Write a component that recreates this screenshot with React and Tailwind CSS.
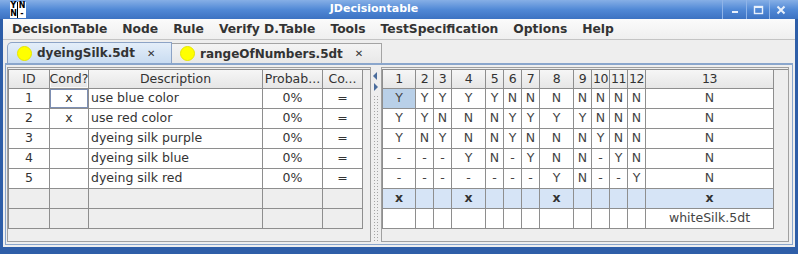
import React from "react";

const menuItems = ["DecisionTable", "Node", "Rule", "Verify D.Table", "Tools", "TestSpecification", "Options", "Help"];

const leftRows = [
  ["1", "x", "use blue color", "0%", "="],
  ["2", "x", "use red color", "0%", "="],
  ["3", "", "dyeing silk purple", "0%", "="],
  ["4", "", "dyeing silk blue", "0%", "="],
  ["5", "", "dyeing silk red", "0%", "="],
];

const rightRows = [
  "Y Y Y Y Y N N N N N N N N",
  "Y Y N N N Y Y Y Y N N N N",
  "Y N Y N N Y N N N Y N N N",
  "- - - Y N - Y N N - Y N N",
  "- - - - - - - Y N - - Y N",
].map((r) => r.split(" "));

const formRow = ["x", "", "", "x", "", "", "", "x", "", "", "", "", "x"];

const cell = "border-r border-b border-[#8e8e8e] flex items-center justify-center overflow-hidden whitespace-nowrap";

function TitleBar() {
  return (
    <div className="h-[19px] flex items-stretch bg-gradient-to-b from-[#86afe6] via-[#5189d6] to-[#3c72c2]">
      <div className="ml-[10px] mt-[2px] w-[16px] h-[16px] bg-white grid grid-cols-2 text-[8px] leading-[8px] font-bold text-black font-['DejaVu_Sans',sans-serif]">
        <span className="text-center border-r border-black">Y</span>
        <span className="text-center">N</span>
        <span className="text-center border-r border-black">N</span>
        <span className="text-center">-</span>
      </div>
      <div className="flex-1 flex items-center justify-center text-white font-bold text-[11px] font-['DejaVu_Sans',sans-serif]">
        JDecisiontable
      </div>
      <div className="flex items-stretch">
        <div className="w-[24px] border-l border-[#8fb4e8] flex items-center justify-center">
          <svg width="10" height="10" viewBox="0 0 10 10">
            <rect x="2" y="6" width="6" height="2" fill="#e8f0fb" />
          </svg>
        </div>
        <div className="w-[23px] border-l border-[#8fb4e8] flex items-center justify-center">
          <svg width="11" height="10" viewBox="0 0 11 10">
            <rect x="1.5" y="1.5" width="8" height="7" fill="none" stroke="#e8f0fb" strokeWidth="1.4" />
            <rect x="1.5" y="1" width="8" height="2" fill="#e8f0fb" />
          </svg>
        </div>
        <div className="w-[29px] border-l border-[#8fb4e8] flex items-center justify-center pr-[6px]">
          <svg width="10" height="10" viewBox="0 0 10 10">
            <path d="M1.5 1.5 L8.5 8.5 M8.5 1.5 L1.5 8.5" stroke="#e8f0fb" strokeWidth="2" />
          </svg>
        </div>
      </div>
    </div>
  );
}

function LeftTable() {
  return (
    <div className="border-l border-t border-[#8e8e8e] grid grid-cols-[41px_39px_174px_60px_40px] text-[12.5px] text-[#333]">
      {["ID", "Cond?", "Description", "Probab...", "Co..."].map((h, i) => (
        <div key={h} className={`${cell} h-[19px] bg-gradient-to-b from-[#f6f6f6] to-[#e6e6e6] ${i === 1 ? "shadow-[inset_0_0_0_1px_#fafafa]" : ""}`}>
          {h}
        </div>
      ))}
      {leftRows.map((r, ri) =>
        r.map((c, ci) => (
          <div
            key={`${ri}-${ci}`}
            className={`${cell} h-[20px] bg-white ${ci === 2 ? "!justify-start pl-[2px]" : ""} ${ri === 0 && ci === 1 ? "shadow-[inset_0_0_0_1px_#7d8fb3]" : ""}`}
          >
            {c}
          </div>
        ))
      )}
      {[0, 1].map((ri) =>
        [0, 1, 2, 3, 4].map((ci) => <div key={`e${ri}-${ci}`} className={`${cell} h-[20px] bg-[#eeeeee]`} />)
      )}
    </div>
  );
}

function RightTable() {
  return (
    <div className="border-l border-t border-[#8e8e8e] grid grid-cols-[33px_18px_18px_34px_18px_18px_18px_34px_18px_18px_18px_18px_128px] text-[12.5px] text-[#444]">
      {Array.from({ length: 13 }, (_, i) => (
        <div key={`h${i}`} className={`${cell} h-[19px] bg-gradient-to-b from-[#f6f6f6] to-[#e6e6e6] text-[#333] tracking-[-0.5px]`}>
          {i + 1}
        </div>
      ))}
      {rightRows.map((r, ri) =>
        r.map((c, ci) => (
          <div key={`${ri}-${ci}`} className={`${cell} h-[20px] ${ri === 0 && ci === 0 ? "bg-[#b9d0e8]" : "bg-white"}`}>
            {c}
          </div>
        ))
      )}
      {formRow.map((c, ci) => (
        <div key={`f${ci}`} className={`${cell} h-[20px] bg-[#d6e4f6] font-bold text-[#333]`}>
          {c}
        </div>
      ))}
      {formRow.map((_, ci) => (
        <div key={`w${ci}`} className={`${cell} h-[20px] bg-white`}>
          {ci === 12 ? "whiteSilk.5dt" : ""}
        </div>
      ))}
    </div>
  );
}

function Splitter() {
  return (
    <div className="w-[10px] flex flex-col items-center">
      <svg width="10" height="24" viewBox="0 0 10 24" className="mt-[4px] shrink-0">
        <path d="M6 1 L2 5 L6 9 Z" fill="#4a6c9c" />
        <path d="M3 12 L7 16 L3 20 Z" fill="#4a6c9c" />
      </svg>
      <div className="flex-1 w-[7px] mb-[1px] bg-[radial-gradient(circle,#a4a4a4_0.7px,transparent_0.9px)] bg-[length:3px_3px]" />
    </div>
  );
}

export default function App() {
  return (
    <div className="w-[798px] h-[254px] overflow-hidden flex flex-col bg-[#2e5ea8] font-['DejaVu_Sans',sans-serif]">
      <TitleBar />
      <div className="flex-1 mx-[3px] mb-[7px] flex flex-col bg-[#eeeeee] pb-[2px]">
        <div className="h-[21px] flex items-center gap-[15px] pl-[9px] bg-gradient-to-b from-[#fbfbfb] to-[#efefef] border-b border-[#c4c4c4] text-[12.3px] font-bold text-[#333]">
          {menuItems.map((m) => (
            <span key={m}>{m}</span>
          ))}
        </div>
        <div className="h-[23px] flex items-end pl-[4px]">
          <div className="w-[165px] h-[21px] flex items-center border border-b-0 border-[#8ca3c6] rounded-tl-[5px] bg-gradient-to-b from-[#e4eef9] to-[#c9dcf1] text-[12px] font-bold text-[#333]">
            <span className="ml-[9px] w-[15px] h-[15px] rounded-full bg-[#ffff00] border border-[#e6e600]" />
            <span className="ml-[5px]">dyeingSilk.5dt</span>
            <span className="ml-[12px] text-[10px]">✕</span>
          </div>
          <div className="w-[210px] h-[20px] flex items-center border border-b-0 border-l-0 border-[#a4a4a4] bg-gradient-to-b from-[#f4f4f4] to-[#e8e8e8] text-[12px] font-bold text-[#333]">
            <span className="ml-[8px] w-[15px] h-[15px] rounded-full bg-[#ffff00] border border-[#e6e600]" />
            <span className="ml-[5px]">rangeOfNumbers.5dt</span>
            <span className="ml-[12px] text-[10px]">✕</span>
          </div>
        </div>
        <div className="flex-1 ml-[2px] mr-[2px] flex border border-t-2 border-[#8aa6cc] pl-[1px] pr-[3px] pt-[2px] pb-[2px] bg-[#eeeeee]">
          <div className="w-[364px] border border-[#a0a0a0] pt-[1px]">
            <LeftTable />
          </div>
          <Splitter />
          <div className="w-[408px] border border-[#a0a0a0] pt-[1px]">
            <RightTable />
          </div>
        </div>
      </div>
    </div>
  );
}
